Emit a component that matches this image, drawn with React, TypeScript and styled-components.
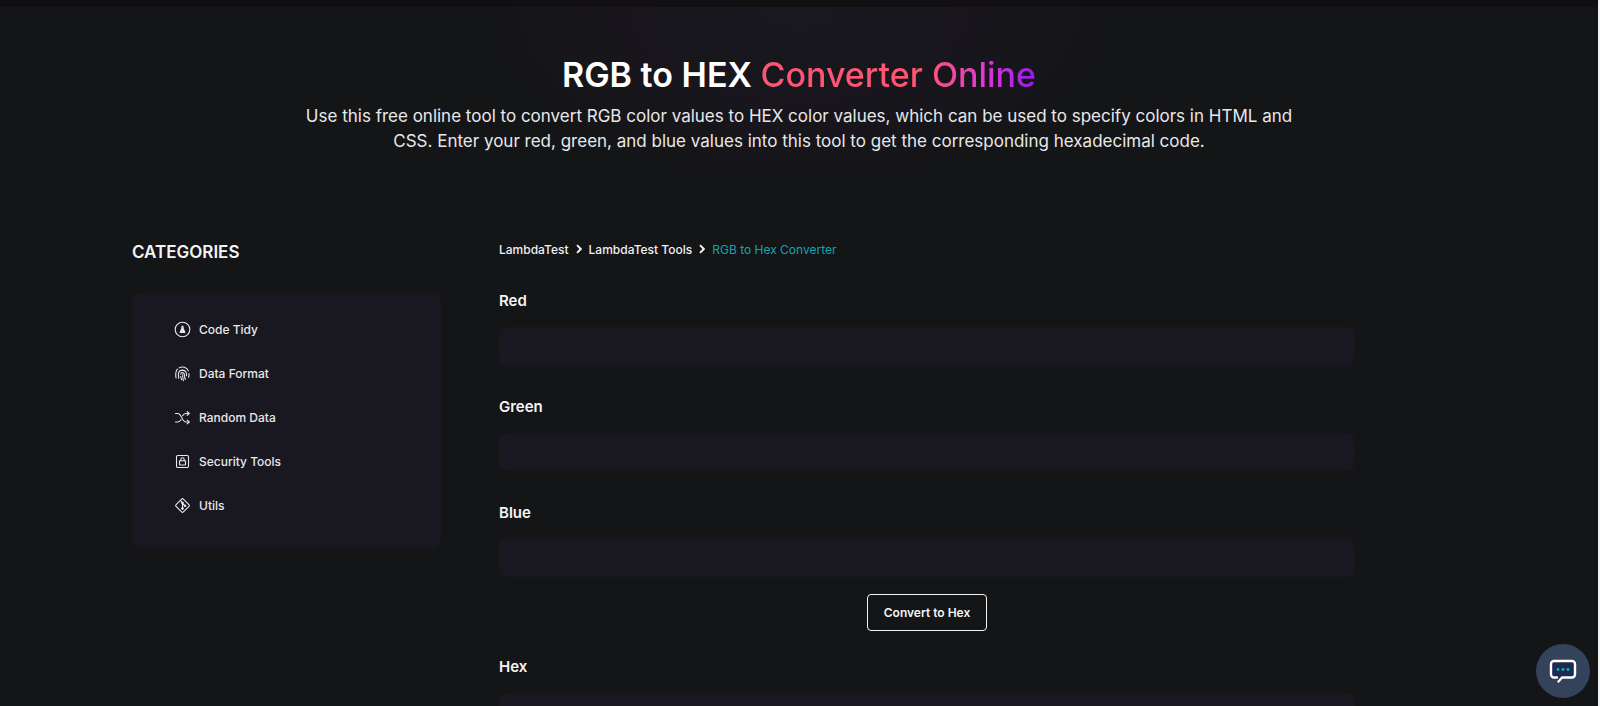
import React, { useState } from "react";
import styled, { createGlobalStyle } from "styled-components";

const GlobalStyle = createGlobalStyle`
  *, *::before, *::after { box-sizing: border-box; }
  body {
    margin: 0;
    background: #141517;
    color: #f4f4f5;
    font-family: Inter, "Liberation Sans", sans-serif;
  }
`;

const Page = styled.div`
  height: 100vh;
  overflow-y: auto;
  scrollbar-width: none;
  border-right: 2px solid #f4f4f5;
  background: #141517;
`;

const Hero = styled.header`
  display: flex;
  flex-direction: column;
  align-items: center;
  padding: 46px 24px 85px;
  border-top: 7px solid #120f12;
  background: radial-gradient(340px 190px at 50% 0, #191820 0%, #18161c 55%, #141517 100%);
  text-align: center;
`;

const Title = styled.h1`
  margin: 0;
  font-size: 34px;
  line-height: 44px;
  font-weight: 600;
  color: #ffffff;
`;

const Accent = styled.span`
  font-weight: 500;
  background: linear-gradient(90deg, #ff5574 0%, #ff5574 60%, #e23ad0 80%, #951aef 100%);
  background-clip: text;
  -webkit-background-clip: text;
  color: transparent;
`;

const Lead = styled.p`
  max-width: 990px;
  margin: 7px 0 0;
  font-size: 17px;
  line-height: 25px;
  color: #e8e8ea;
`;

const Columns = styled.div`
  display: grid;
  grid-template-columns: 309px minmax(0, 1fr);
  column-gap: 58px;
  padding: 0 243px 48px 132px;
`;

const SidebarTitle = styled.h2`
  margin: 0 0 28px;
  font-size: 17px;
  line-height: 26px;
  font-weight: 600;
`;

const Menu = styled.ul`
  display: flex;
  flex-direction: column;
  gap: 20px;
  margin: 0;
  padding: 24px 42px 31px;
  list-style: none;
  border-radius: 8px;
  background: #19171f;
`;

const MenuLink = styled.a`
  display: flex;
  align-items: center;
  gap: 8px;
  height: 24px;
  font-size: 12px;
  font-weight: 500;
  color: #e8e8ea;
  text-decoration: none;

  svg { width: 17px; height: 17px; }
`;

const Crumbs = styled.nav`
  display: flex;
  align-items: center;
  gap: 7px;
  height: 20px;
  font-size: 12px;
`;

const Crumb = styled.a<{ $current?: boolean }>`
  color: ${(p) => (p.$current ? "#12a5b0" : "#f0f0f1")};
  font-weight: ${(p) => (p.$current ? 400 : 500)};
  text-decoration: none;
`;

const Field = styled.div`
  display: flex;
  flex-direction: column;
  gap: 14px;
  margin-top: 30px;
`;

const Label = styled.label`
  font-size: 15px;
  line-height: 24px;
  font-weight: 600;
`;

const TextInput = styled.input`
  width: 100%;
  height: 38px;
  padding: 0 16px;
  border: 0;
  border-radius: 8px;
  outline-color: #12a5b0;
  background: #19171f;
  color: #f4f4f5;
  font: inherit;
`;

const Actions = styled.div`
  display: flex;
  justify-content: center;
  margin: 17px 0 -6px;
`;

const ConvertButton = styled.button`
  height: 37px;
  padding: 0 16px;
  border: 1px solid #f4f4f5;
  border-radius: 4px;
  background: transparent;
  color: #f4f4f5;
  font: 600 12px Inter, "Liberation Sans", sans-serif;
  cursor: pointer;
`;

const ChatButton = styled.button`
  position: fixed;
  right: 10px;
  bottom: 8px;
  display: grid;
  place-items: center;
  width: 54px;
  height: 54px;
  padding: 0;
  border: 0;
  border-radius: 50%;
  background: #34425c;
  cursor: pointer;
`;

const Line = ({ children }: { children: React.ReactNode }) => (
  <svg viewBox="0 0 17 17" fill="none" stroke="currentColor" strokeWidth="1.1" strokeLinecap="round" strokeLinejoin="round" aria-hidden="true">
    {children}
  </svg>
);

const TidyIcon = () => (
  <Line>
    <circle cx="8.5" cy="8.5" r="7.3" />
    <path d="M7.600 4.800h1.800l.3 2.500 1.600 3.700v1H5.700v-1l1.600-3.700z" fill="currentColor" stroke="none" />
  </Line>
);

const FingerprintIcon = () => (
  <Line>
    <path d="M2 13c-.7-4.500-.1-7.100 1.400-8.800M5.100 2.900c3.500-2.100 7.900-.5 9.200 3M15 8.500c.2 1.600 0 2.500-.4 3.800" />
    <path d="M4.700 13.300C4 9 4.100 5.200 8.500 5.100c3.500 0 4.300 3 4 5.700" />
    <path d="M6.700 9.300c.3-2.300 3.500-2.200 3.700.3.100 2 .3 3.700.9 4.900M6.700 11.200c.1 1.300.5 2.500 1 3.500M8.600 9.700c.1 2.200.3 4 .8 6" />
  </Line>
);

const ShuffleIcon = () => (
  <Line>
    <path d="M1.500 4.500h2.300C8 4.500 7.500 13 12 13h3M1.500 13h2.300c1.600 0 2.500-.9 3.200-2.200M8.600 6.800c.7-1.300 1.600-2.300 3.400-2.300h3" />
    <path d="M13.200 2.700 15.200 4.500 13.200 6.300M13.200 11.200 15.200 13 13.200 14.800" />
  </Line>
);

const LockIcon = () => (
  <Line>
    <rect x="2.500" y="2.500" width="12" height="12" rx="1.200" />
    <rect x="5.500" y="7.800" width="6" height="4.200" rx=".4" />
    <path d="M6.800 7.800V6.400a1.700 1.700 0 0 1 3.400 0v1.400" />
  </Line>
);

const UtilsIcon = () => (
  <Line>
    <path d="M7.600 2.100 2.100 7.600a1.300 1.300 0 0 0 0 1.800l5.500 5.500a1.300 1.300 0 0 0 1.800 0l5.500-5.500a1.300 1.300 0 0 0 0-1.800L9.400 2.100a1.300 1.300 0 0 0-1.800 0zM6.500 3.700l2 2v6M8.500 6.500l2.500 2.300" />
    <circle cx="8.500" cy="6" r=".8" fill="currentColor" />
    <circle cx="8.500" cy="11.500" r=".8" fill="currentColor" />
    <circle cx="11" cy="8.700" r=".7" fill="currentColor" />
  </Line>
);

const Chevron = () => (
  <svg width="6" height="10" viewBox="0 0 6 10" fill="none" stroke="#f4f4f5" strokeWidth="1.900" aria-hidden="true">
    <path d="M1 1.200 4.800 5 1 8.800" />
  </svg>
);

const categories = [
  { name: "Code Tidy", Icon: TidyIcon },
  { name: "Data Format", Icon: FingerprintIcon },
  { name: "Random Data", Icon: ShuffleIcon },
  { name: "Security Tools", Icon: LockIcon },
  { name: "Utils", Icon: UtilsIcon },
];

const channels = ["Red", "Green", "Blue"];

export default function App() {
  const [values, setValues] = useState<Record<string, string>>({});
  const [hex, setHex] = useState("");

  const convert = (event: React.FormEvent) => {
    event.preventDefault();
    const parts = channels.map((name) => {
      const level = Math.max(0, Math.min(255, Number(values[name]) || 0));
      return Math.round(level).toString(16).padStart(2, "0");
    });
    setHex("#" + parts.join(""));
  };

  return (
    <Page>
      <GlobalStyle />
      <Hero>
        <Title>
          RGB to HEX <Accent>Converter Online</Accent>
        </Title>
        <Lead>
          Use this free online tool to convert RGB color values to HEX color values, which can be used to specify colors in HTML and CSS. Enter your red, green, and blue values into this tool to get the corresponding hexadecimal code.
        </Lead>
      </Hero>
      <Columns>
        <aside>
          <SidebarTitle>CATEGORIES</SidebarTitle>
          <Menu>
            {categories.map(({ name, Icon }) => (
              <li key={name}>
                <MenuLink href="#">
                  <Icon />
                  {name}
                </MenuLink>
              </li>
            ))}
          </Menu>
        </aside>
        <main>
          <Crumbs aria-label="Breadcrumb">
            <Crumb href="#">LambdaTest</Crumb>
            <Chevron />
            <Crumb href="#">LambdaTest Tools</Crumb>
            <Chevron />
            <Crumb href="#" $current aria-current="page">RGB to Hex Converter</Crumb>
          </Crumbs>
          <form onSubmit={convert}>
            {channels.map((name) => (
              <Field key={name}>
                <Label htmlFor={name}>{name}</Label>
                <TextInput
                  id={name}
                  value={values[name] || ""}
                  onChange={(e) => setValues({ ...values, [name]: e.target.value })}
                />
              </Field>
            ))}
            <Actions>
              <ConvertButton type="submit">Convert to Hex</ConvertButton>
            </Actions>
            <Field>
              <Label htmlFor="hex">Hex</Label>
              <TextInput id="hex" readOnly value={hex} />
            </Field>
          </form>
        </main>
      </Columns>
      <ChatButton aria-label="Open chat">
        <svg width="28" height="26" viewBox="0 0 28 26" fill="none" aria-hidden="true">
          <path d="M8 19.500H5a3 3 0 0 1-3-3V6a3 3 0 0 1 3-3h18a3 3 0 0 1 3 3v10.500a3 3 0 0 1-3 3H13L9.500 23.500" fill="#1c2b50" stroke="#fff" strokeWidth="2.400" strokeLinecap="round" strokeLinejoin="round" />
          <circle cx="9" cy="11.500" r="1.400" fill="#10b5bf" />
          <circle cx="14" cy="11.500" r="1.400" fill="#10b5bf" />
          <circle cx="19" cy="11.500" r="1.400" fill="#10b5bf" />
        </svg>
      </ChatButton>
    </Page>
  );
}
